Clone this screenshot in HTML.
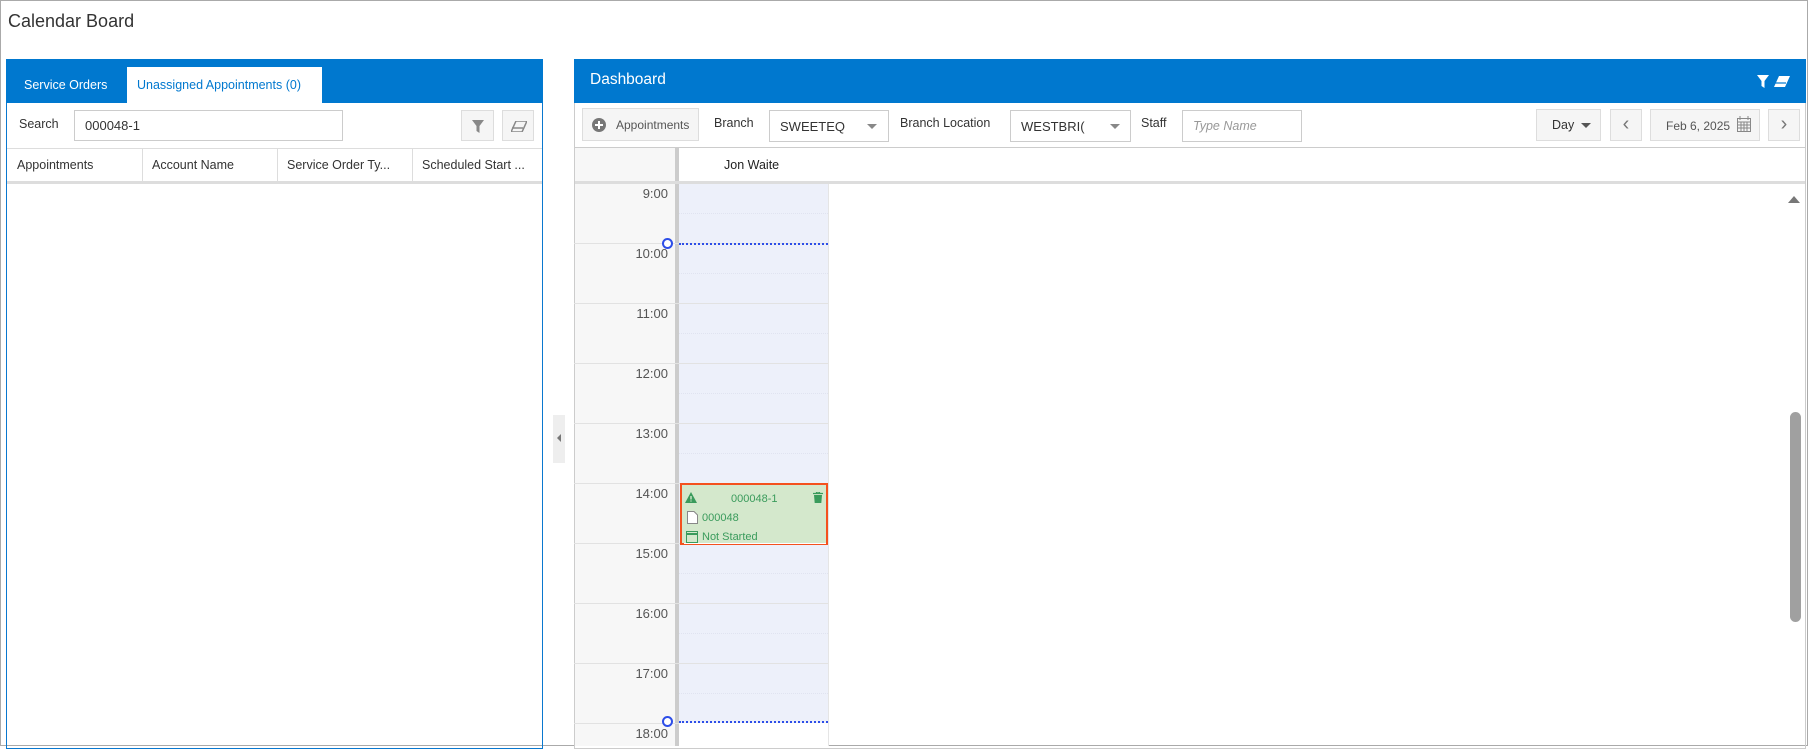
<!DOCTYPE html>
<html><head><style>
*{box-sizing:border-box;margin:0;padding:0}
body{width:1808px;height:746px;position:relative;overflow:hidden;background:#fff;font-family:"Liberation Sans",sans-serif;font-size:12.5px;color:#333}
.a{position:absolute}
.btn{position:absolute;background:#f5f5f5;border:1px solid #ddd}
.inp{position:absolute;background:#fff;border:1px solid #ccc;font-size:13px;padding:0 10px;display:flex;align-items:center}
.hl{position:absolute;left:574px;width:254px;height:1px;background:#e2e2e2}
.hh{position:absolute;left:679px;width:149px;border-top:1px dotted #e0e3f0}
.tl{position:absolute;left:600px;width:68px;text-align:right;font-size:13px;color:#555}
</style></head><body>
<div class="a" style="left:0;top:0;width:1808px;height:746px;border:1px solid #aaa"></div>
<div class="a" style="left:8px;top:11px;font-size:18px;color:#333">Calendar Board</div>

<!-- left panel -->
<div class="a" style="left:6px;top:59px;width:537px;height:690px;border:1px solid #0a78cf"></div>
<div class="a" style="left:6px;top:59px;width:537px;height:44px;background:#0078cf"></div>
<div class="a" style="left:24px;top:78px;color:#fff;font-size:12.5px">Service Orders</div>
<div class="a" style="left:127px;top:67px;width:195px;height:36px;background:#fff;color:#0078cf;font-size:12.5px;padding:11px 0 0 10px">Unassigned Appointments (0)</div>
<div class="a" style="left:19px;top:117px">Search</div>
<div class="inp" style="left:74px;top:110px;width:269px;height:31px">000048-1</div>
<div class="btn" style="left:461px;top:110px;width:33px;height:31px"><svg class="a" style="left:10px;top:9px" width="12" height="13" viewBox="0 0 12 13"><path d="M0 0H12L7.5 6V13L4.5 11V6Z" fill="#888"/></svg></div>
<div class="btn" style="left:502px;top:110px;width:32px;height:31px"><svg class="a" style="left:8px;top:10px" width="16" height="11" viewBox="0 0 16 11"><path d="M5 0H16L11 11H0Z" fill="none" stroke="#888" stroke-width="1.5"/><path d="M1 7H12" stroke="#888" stroke-width="1.5"/></svg></div>
<div class="a" style="left:7px;top:148px;width:535px;height:1px;background:#ddd"></div>
<div class="a" style="left:7px;top:181px;width:535px;height:3px;background:#ddd"></div>
<div class="a" style="left:142px;top:148px;width:1px;height:34px;background:#ddd"></div>
<div class="a" style="left:277px;top:148px;width:1px;height:34px;background:#ddd"></div>
<div class="a" style="left:412px;top:148px;width:1px;height:34px;background:#ddd"></div>
<div class="a" style="left:17px;top:158px">Appointments</div>
<div class="a" style="left:152px;top:158px">Account Name</div>
<div class="a" style="left:287px;top:158px">Service Order Ty...</div>
<div class="a" style="left:422px;top:158px">Scheduled Start ...</div>

<!-- splitter -->
<div class="a" style="left:553px;top:415px;width:12px;height:48px;background:#eee"></div>
<div class="a" style="left:557px;top:434px;width:0;height:0;border-top:4px solid transparent;border-bottom:4px solid transparent;border-right:4px solid #777"></div>

<!-- right panel -->
<div class="a" style="left:574px;top:59px;width:1232px;height:690px;border:1px solid #ccc"></div>
<div class="a" style="left:574px;top:59px;width:1232px;height:44px;background:#0078cf"></div>
<div class="a" style="left:590px;top:71px;color:#fff;font-size:15.5px">Dashboard</div>
<svg class="a" style="left:1757px;top:75px" width="12" height="13" viewBox="0 0 12 13"><path d="M0 0H12L7.5 6V13L4.5 11V6Z" fill="#fff"/></svg>
<svg class="a" style="left:1774px;top:76px" width="16" height="11" viewBox="0 0 16 11"><path d="M5 0H16L11 11H0Z" fill="#fff"/><path d="M1 7H12" stroke="#0078cf" stroke-width="1.2"/></svg>

<div class="btn" style="left:582px;top:108px;width:117px;height:33px;font-size:12px;color:#555;padding:9px 0 0 33px">Appointments</div>
<div class="a" style="left:592px;top:118px;width:14px;height:14px;border-radius:50%;background:#777"></div>
<div class="a" style="left:598px;top:121px;width:2px;height:8px;background:#fff"></div>
<div class="a" style="left:595px;top:124px;width:8px;height:2px;background:#fff"></div>
<div class="a" style="left:714px;top:116px">Branch</div>
<div class="inp" style="left:769px;top:110px;width:120px;height:32px">SWEETEQ</div>
<div class="a" style="left:867px;top:124px;border-left:5px solid transparent;border-right:5px solid transparent;border-top:5px solid #888"></div>
<div class="a" style="left:900px;top:116px">Branch Location</div>
<div class="inp" style="left:1010px;top:110px;width:121px;height:32px">WESTBRI(</div>
<div class="a" style="left:1110px;top:124px;border-left:5px solid transparent;border-right:5px solid transparent;border-top:5px solid #888"></div>
<div class="a" style="left:1141px;top:116px">Staff</div>
<div class="inp" style="left:1182px;top:110px;width:120px;height:32px;color:#999;font-style:italic;font-size:12.5px">Type Name</div>
<div class="btn" style="left:1536px;top:109px;width:65px;height:32px;font-size:12.5px;padding:8px 0 0 15px">Day</div>
<div class="a" style="left:1581px;top:123px;border-left:5px solid transparent;border-right:5px solid transparent;border-top:5px solid #555"></div>
<div class="btn" style="left:1610px;top:109px;width:32px;height:32px;color:#777;font-size:20px;text-align:center;line-height:29px">‹</div>
<div class="btn" style="left:1650px;top:109px;width:110px;height:32px;font-size:12px;color:#555;padding:9px 0 0 15px">Feb 6, 2025</div>
<svg class="a" style="left:1737px;top:116px" width="14" height="16" viewBox="0 0 14 16"><rect x="0.5" y="2.5" width="13" height="13" fill="none" stroke="#888"/><path d="M0 6H14M3 0V4M11 0V4M0 9H14M0 12H14M4 6V16M7 6V16M10 6V16" stroke="#888"/></svg>
<div class="btn" style="left:1768px;top:109px;width:32px;height:32px;color:#777;font-size:20px;text-align:center;line-height:29px">›</div>
<div class="a" style="left:575px;top:147px;width:1230px;height:1px;background:#ccc"></div>

<!-- calendar -->
<div class="a" style="left:575px;top:148px;width:100px;height:598px;background:#f7f7f7"></div>
<div class="a" style="left:675px;top:148px;width:4px;height:598px;background:#ccc"></div>
<div class="a" style="left:679px;top:183px;width:149px;height:563px;background:#edf0fa"></div>
<div class="a" style="left:828px;top:183px;width:1px;height:563px;background:#e5e5e5"></div>
<div class="a" style="left:679px;top:148px;width:1126px;height:34px;background:#fff"></div>
<div class="a" style="left:724px;top:158px;color:#222">Jon Waite</div>
<div class="a" style="left:575px;top:181px;width:1230px;height:3px;background:#ddd"></div>

<div class="hl" style="top:243px"></div><div class="hl" style="top:303px"></div><div class="hl" style="top:363px"></div><div class="hl" style="top:423px"></div><div class="hl" style="top:483px"></div><div class="hl" style="top:543px"></div><div class="hl" style="top:603px"></div><div class="hl" style="top:663px"></div><div class="hl" style="top:723px"></div>
<div class="hh" style="top:213px"></div><div class="hh" style="top:273px"></div><div class="hh" style="top:333px"></div><div class="hh" style="top:393px"></div><div class="hh" style="top:453px"></div><div class="hh" style="top:573px"></div><div class="hh" style="top:633px"></div><div class="hh" style="top:693px"></div>
<div class="tl" style="top:186px">9:00</div><div class="tl" style="top:246px">10:00</div><div class="tl" style="top:306px">11:00</div><div class="tl" style="top:366px">12:00</div><div class="tl" style="top:426px">13:00</div><div class="tl" style="top:486px">14:00</div><div class="tl" style="top:546px">15:00</div><div class="tl" style="top:606px">16:00</div><div class="tl" style="top:666px">17:00</div><div class="tl" style="top:726px">18:00</div>

<div class="a" style="left:679px;top:243px;width:149px;border-top:2px dotted #2d4ee8"></div>
<div class="a" style="left:662px;top:238px;width:11px;height:11px;border:2px solid #2d4ee8;border-radius:50%;background:#fff"></div>
<div class="a" style="left:679px;top:721px;width:149px;border-top:2px dotted #2d4ee8"></div>
<div class="a" style="left:662px;top:716px;width:11px;height:11px;border:2px solid #2d4ee8;border-radius:50%;background:#fff"></div>
<div class="a" style="left:679px;top:723px;width:149px;height:23px;background:#fff"></div>

<!-- appointment -->
<div class="a" style="left:680px;top:483px;width:148px;height:62px;border:2px solid #f4511e;background:#d4e8cc;color:#3a9b5c;font-size:11px">
<svg class="a" style="left:3px;top:7px" width="12" height="11" viewBox="0 0 12 11"><path d="M6 0L12 11H0Z" fill="#3a9b5c"/><path d="M6 4V7.5M6 8.5V9.5" stroke="#d4e8cc" stroke-width="1.4"/></svg>
<div class="a" style="left:49px;top:8px">000048-1</div>
<svg class="a" style="left:131px;top:7px" width="10" height="11" viewBox="0 0 10 11"><path d="M0 1.5H10M3.5 1.5V0H6.5V1.5" stroke="#3a9b5c" stroke-width="1.2" fill="none"/><path d="M1 3H9L8.3 11H1.7Z" fill="#3a9b5c"/></svg>
<svg class="a" style="left:5px;top:26px" width="11" height="13" viewBox="0 0 11 13"><path d="M0.5 0.5H7L10.5 4V12.5H0.5Z" fill="#fff" stroke="#888"/></svg>
<div class="a" style="left:20px;top:27px">000048</div>
<svg class="a" style="left:4px;top:45px" width="12" height="13" viewBox="0 0 12 13"><rect x="0.5" y="1.5" width="11" height="11" fill="none" stroke="#3a9b5c"/><path d="M0 4H12" stroke="#3a9b5c" stroke-width="2"/></svg>
<div class="a" style="left:20px;top:46px">Not Started</div>
<div class="a" style="left:2px;top:58px;width:142px;height:1px;background:#fff"></div>
</div>

<!-- scrollbar -->
<div class="a" style="left:1788px;top:196px;border-left:6px solid transparent;border-right:6px solid transparent;border-bottom:7px solid #777"></div>
<div class="a" style="left:1790px;top:412px;width:11px;height:210px;border-radius:6px;background:#a0a0a0"></div>
</body></html>
